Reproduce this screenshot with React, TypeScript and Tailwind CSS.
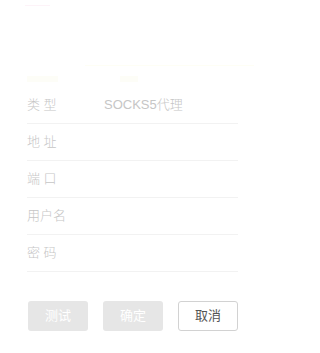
const rows = [
	{ label: "类 型", value: "SOCKS5代理" },
	{ label: "地 址", value: "" },
	{ label: "端 口", value: "" },
	{ label: "用户名", value: "" },
	{ label: "密 码", value: "" },
];

export default function App() {
	return (
		<div
			className="w-[254px] h-[353px] bg-white overflow-hidden text-[13px]"
			style={{ fontFamily: '"Liberation Sans", "Noto Sans CJK SC", sans-serif' }}
		>
			<div className="pt-[5px] pl-[25px]">
				<div className="w-[25px] h-[1px] bg-[#fdf3f8]" />
			</div>
			<div className="mt-[59px] ml-[85px] h-[1px] bg-[#fefef5]" />
			<div className="mt-[10px] flex pl-[27px] gap-[62px] h-[8px]">
				<div className="w-[31px] h-[6px] bg-[#fdfdf7]" />
				<div className="w-[18px] h-[6px] bg-[#fdfdf7]" />
			</div>
			<div className="mt-[3px] pl-[27px] pr-[16px] flex flex-col">
				{rows.map((row) => (
					<div
						key={row.label}
						className="h-[37px] flex items-center border-b border-[#f2f2f2] text-[#c6c6c6] font-light"
					>
						<span className="w-[77px] whitespace-pre">{row.label}</span>
						<span>{row.value}</span>
					</div>
				))}
			</div>
			<div className="mt-[29px] flex gap-[15px] pl-[28px]">
				<button className="w-[60px] h-[30px] rounded-[3px] bg-[#e6e6e6] text-white">
					测试
				</button>
				<button className="w-[60px] h-[30px] rounded-[3px] bg-[#e6e6e6] text-white">
					确定
				</button>
				<button className="w-[60px] h-[30px] rounded-[3px] border border-[#d2d2d2] bg-white text-[#555]">
					取消
				</button>
			</div>
		</div>
	);
}
